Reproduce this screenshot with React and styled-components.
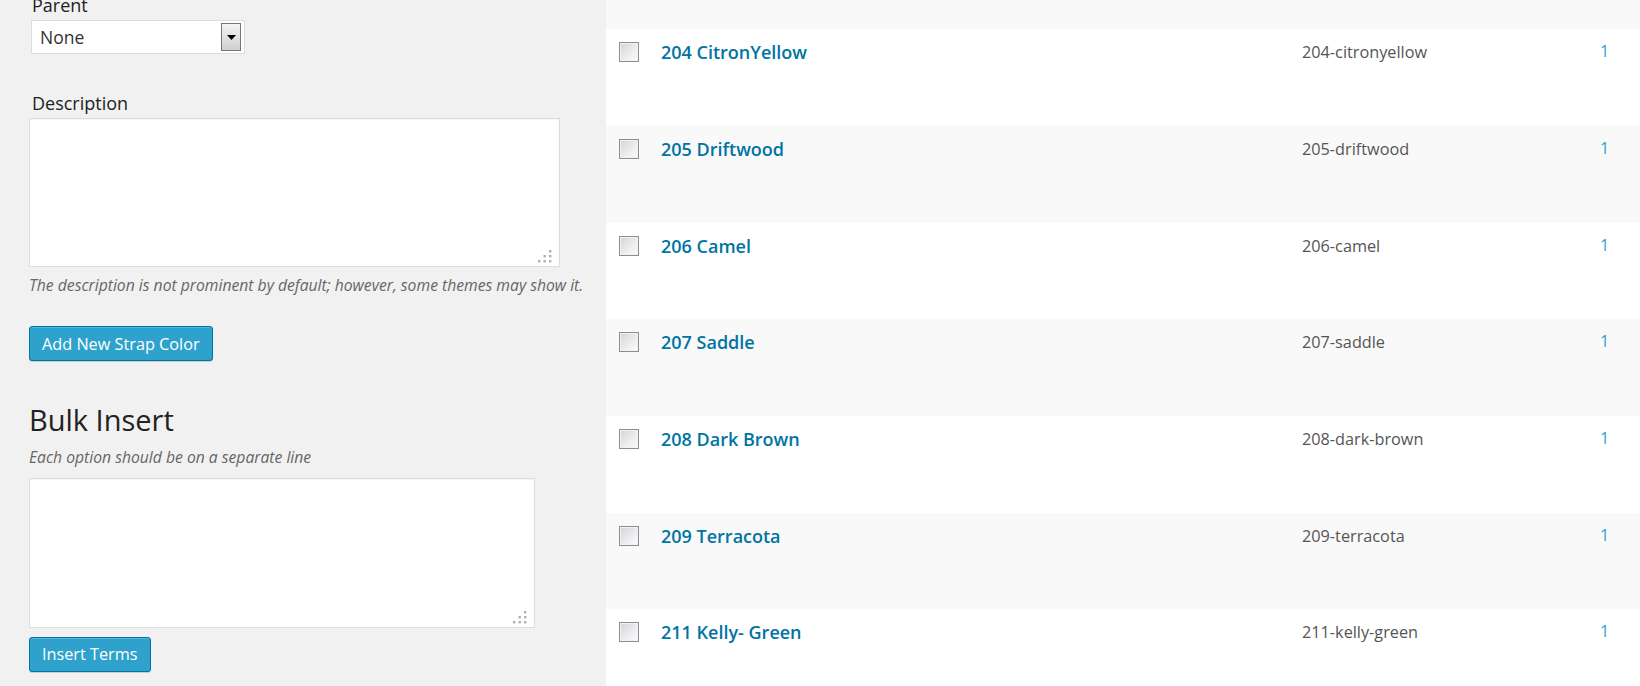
import React from 'react'
import styled, { createGlobalStyle } from 'styled-components'

const terms = [
  { name: '204 CitronYellow', slug: '204-citronyellow', count: 1 },
  { name: '205 Driftwood', slug: '205-driftwood', count: 1 },
  { name: '206 Camel', slug: '206-camel', count: 1 },
  { name: '207 Saddle', slug: '207-saddle', count: 1 },
  { name: '208 Dark Brown', slug: '208-dark-brown', count: 1 },
  { name: '209 Terracota', slug: '209-terracota', count: 1 },
  { name: '211 Kelly- Green', slug: '211-kelly-green', count: 1 },
]

const GlobalStyle = createGlobalStyle`
  html, body {
    margin: 0;
    padding: 0;
    height: 686px;
    overflow: hidden;
    background: #f1f1f1;
  }
  * { box-sizing: border-box; }
`

const Grip = () => (
  <GripIcon width="15" height="13" viewBox="0 0 15 13">
    <rect x="12" y="0" width="2.4" height="2.4" />
    <rect x="6.5" y="5" width="2.4" height="2.4" />
    <rect x="12" y="5" width="2.4" height="2.4" />
    <rect x="1" y="10" width="2.4" height="2.4" />
    <rect x="6.5" y="10" width="2.4" height="2.4" />
    <rect x="12" y="10" width="2.4" height="2.4" />
  </GripIcon>
)

const App = () => {
  return (
    <Page>
      <GlobalStyle />
      <FormColumn>
        <Label>Parent</Label>
        <SelectBox>
          <span>None</span>
          <SelectArrow>
            <svg width="9" height="5" viewBox="0 0 9 5">
              <path d="M0 0h9L4.5 5z" fill="#000" />
            </svg>
          </SelectArrow>
        </SelectBox>

        <Label spaced>Description</Label>
        <TextAreaWrap width={531}>
          <TextArea height={149} />
          <Grip />
        </TextAreaWrap>
        <Hint>
          The description is not prominent by default; however, some themes
          may show it.
        </Hint>
        <Button top={29}>Add New Strap Color</Button>

        <SectionTitle>Bulk Insert</SectionTitle>
        <Hint>Each option should be on a separate line</Hint>
        <TextAreaWrap width={506} top={9}>
          <TextArea height={150} />
          <Grip />
        </TextAreaWrap>
        <Button top={9}>Insert Terms</Button>
      </FormColumn>

      <TermsTable>
        <TableGap />
        {terms.map((term, i) => (
          <Row key={term.slug} alt={i % 2 === 1}>
            <CheckCell>
              <CheckBox />
            </CheckCell>
            <Cell>
              <TitleLink>{term.name}</TitleLink>
            </Cell>
            <SlugCell>{term.slug}</SlugCell>
            <Cell>
              <CountLink>{term.count}</CountLink>
            </Cell>
          </Row>
        ))}
      </TermsTable>
    </Page>
  )
}

const Page = styled.div`
  display: flex;
  height: 686px;
  font-family: 'Open Sans', 'Liberation Sans', sans-serif;
  color: #222;
`

const FormColumn = styled.div`
  width: 606px;
  flex-shrink: 0;
  padding: 0 0 0 29px;
  margin-top: -7px;
  background: #f1f1f1;
`

const Label = styled.div`
  font-size: 18px;
  line-height: 1.4;
  color: #222;
  padding-left: 3px;
  margin-top: ${p => (p.spaced ? '37px' : '0')};
  margin-bottom: 2px;
`

const SelectBox = styled.div`
  width: 214px;
  height: 34px;
  margin-left: 2px;
  background: #fff;
  border: 1px solid #dcdcdc;
  display: flex;
  align-items: center;
  justify-content: space-between;
  padding: 0 3px 0 8px;
  font-size: 17.5px;
  color: #333;
`

const SelectArrow = styled.div`
  width: 20px;
  height: 28px;
  border: 1px solid #777;
  background: linear-gradient(#f4f4f4, #cfcfcf);
  display: flex;
  align-items: center;
  justify-content: center;
`

const TextAreaWrap = styled.div`
  position: relative;
  width: ${p => p.width}px;
  margin-top: ${p => p.top || 0}px;
`

const TextArea = styled.textarea`
  display: block;
  width: 100%;
  height: ${p => p.height}px;
  border: 1px solid #dddddd;
  background: #fff;
  box-shadow: inset 0 1px 2px rgba(0, 0, 0, 0.05);
  resize: none;
  outline: none;
  font-family: inherit;
`

const GripIcon = styled.svg`
  position: absolute;
  right: 8px;
  bottom: 4px;
  fill: #b0b0b0;
`

const Hint = styled.p`
  margin: 7px 0 0;
  font-size: 15.7px;
  line-height: 1.45;
  font-style: italic;
  color: #666;
  white-space: nowrap;
`

const Button = styled.button`
  display: block;
  margin-top: ${p => p.top}px;
  height: 35px;
  padding: 0 12px;
  font-family: inherit;
  font-size: 16.25px;
  color: #fff;
  background: #2ea2cc;
  border: 1px solid #0074a2;
  border-radius: 3px;
  box-shadow: inset 0 1px 0 rgba(120, 200, 230, 0.5),
    0 1px 0 rgba(0, 0, 0, 0.15);
  cursor: pointer;
`

const SectionTitle = styled.h2`
  margin: 40px 0 0;
  font-size: 29px;
  font-weight: 400;
  line-height: 1.3;
  color: #222;
`

const TermsTable = styled.div`
  flex: 1;
  display: flex;
  flex-direction: column;
  background: #fff;
`

const TableGap = styled.div`
  height: 29.3px;
  flex-shrink: 0;
  background: #f9f9f9;
`

const Row = styled.div`
  display: grid;
  grid-template-columns: 55px 641px 298px 1fr;
  height: 96.67px;
  flex-shrink: 0;
  background: ${p => (p.alt ? '#f9f9f9' : '#fff')};
`

const Cell = styled.div`
  padding-top: 11px;
  line-height: 1.4;
`

const CheckCell = styled.div`
  padding: 13px 0 0 13px;
`

const CheckBox = styled.div`
  width: 20px;
  height: 20px;
  border: 1px solid #8e8e8e;
  box-shadow: inset 0 0 0 1px #f2f2f2;
  background: linear-gradient(135deg, #d2d3da 0%, #eeeef0 60%, #fbfbfb 100%);
`

const TitleLink = styled.a`
  font-size: 18px;
  font-weight: 600;
  color: #0074a2;
  text-decoration: none;
`

const SlugCell = styled(Cell)`
  font-size: 16.25px;
  padding-top: 12px;
  color: #555;
`

const CountLink = styled.a`
  font-size: 16.25px;
  color: #2ea2cc;
  text-decoration: none;
`

export default App
